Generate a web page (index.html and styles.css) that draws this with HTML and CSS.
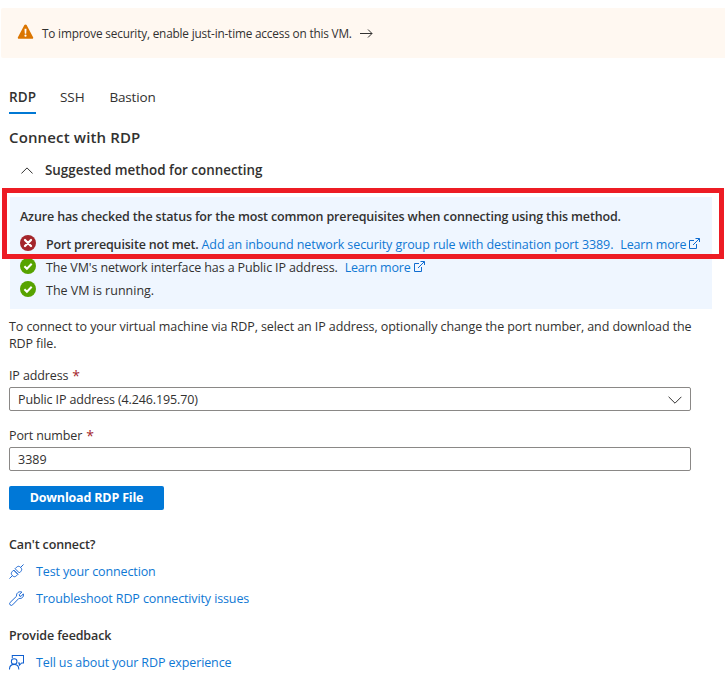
FILE: index.html
```
<!DOCTYPE html>
<html lang="en">
<head>
<meta charset="utf-8">
<title>Connect with RDP</title>
<link rel="stylesheet" href="styles.css">
</head>
<body>
<div class="banner">
  <svg class="warn" width="17" height="16" viewBox="0 0 17 16"><path d="M7.400 1.100a1.200 1.200 0 0 1 2.200 0l6.500 12.200c.4.800-.1 1.500-.9 1.500H1.800c-.8 0-1.300-.7-.9-1.500z" fill="#db7500"/><path d="M7.500 4.800h2l-.3 4.900H7.800z" fill="#fff"/><circle cx="8.500" cy="11.700" r="1.100" fill="#fff"/></svg>
  <span class="t t-banner">To improve security, enable just-in-time access on this VM.</span>
  <svg class="arrow" width="13" height="10" viewBox="0 0 13 10" fill="none" stroke="#323130"><path d="M0 5.500h12M8 1.500l4 4-4 4"/></svg>
</div>
<main>
  <nav class="tabs">
    <a class="tab active"><span class="t t-rdp">RDP</span></a>
    <a class="tab"><span class="t t-ssh">SSH</span></a>
    <a class="tab"><span class="t t-bastion">Bastion</span></a>
  </nav>
  <h1><span class="t t-h1">Connect with RDP</span></h1>
  <h2><svg width="12" height="7" viewBox="0 0 12 7" fill="none" stroke="#323130"><path d="M.4 6.500 6 .9l5.600 5.600"/></svg><span class="t t-h2">Suggested method for connecting</span></h2>
  <section class="panel">
    <div class="title"><span class="t t-title">Azure has checked the status for the most common prerequisites when connecting using this method.</span></div>
    <div class="row first">
      <svg class="status" width="16" height="16" viewBox="0 0 16 16"><circle cx="8" cy="8" r="8" fill="#a4262c"/><path d="m5 5 6 6M11 5l-6 6" stroke="#fff" stroke-width="2.300" stroke-linecap="round"/></svg>
      <b class="t t-port">Port prerequisite not met.</b><a class="t t-add">Add an inbound network security group rule with destination port 3389.</a><a class="t learn">Learn more</a>
      <svg class="ext" width="12" height="11" viewBox="0 0 12 11" fill="none" stroke="#0f6cd0"><path d="M6 2.500H1.500v8h7V6M7.500.5h4V4M11.300.7 5 7"/></svg>
    </div>
    <div class="row">
      <svg class="status" width="16" height="16" viewBox="0 0 16 16"><circle cx="8" cy="8" r="8" fill="#57a300"/><path d="m4.400 8.300 2.500 2.500 4.800-5" fill="none" stroke="#fff" stroke-width="2"/></svg>
      <span class="t t-vm">The VM's network interface has a Public IP address.</span><a class="t learn">Learn more</a>
      <svg class="ext" width="12" height="11" viewBox="0 0 12 11" fill="none" stroke="#0f6cd0"><path d="M6 2.500H1.500v8h7V6M7.500.5h4V4M11.300.7 5 7"/></svg>
    </div>
    <div class="row">
      <svg class="status" width="16" height="16" viewBox="0 0 16 16"><circle cx="8" cy="8" r="8" fill="#57a300"/><path d="m4.400 8.300 2.500 2.500 4.800-5" fill="none" stroke="#fff" stroke-width="2"/></svg>
      <span class="t t-run">The VM is running.</span>
    </div>
    <div class="highlight"></div>
  </section>
  <p class="intro"><span class="t t-p1">To connect to your virtual machine via RDP, select an IP address, optionally change the port number, and download the</span><br><span class="t t-p2">RDP file.</span></p>
  <label><span class="t t-ip">IP address</span><span class="star">*</span></label>
  <div class="field select"><span class="t t-pub">Public IP address (4.246.195.70)</span><svg width="14" height="8" viewBox="0 0 14 8" fill="none" stroke="#323130"><path d="m.6.8 6.400 6.400L13.400.8"/></svg></div>
  <label class="port"><span class="t t-num">Port number</span><span class="star">*</span></label>
  <div class="field"><span class="t t-3389">3389</span></div>
  <button><span class="t t-dl">Download RDP File</span></button>
  <h3 class="cant"><span class="t t-cant">Can't connect?</span></h3>
  <a class="link"><svg width="15" height="15" viewBox="0 0 16 16" fill="none" stroke="#0f5fd0"><path d="M.5 15.500 3.600 12.400M12.400 3.600 15.500.5M5 6.500l4.500 4.500M3.600 12.400c-1.500-1.500-1.500-2.800-.2-4.300L5 6.500l4.500 4.500-1.600 1.600c-1.500 1.300-2.800 1.300-4.300-.2zM6.500 5l4.500 4.500 1.600-1.600c1.300-1.500 1.300-2.800-.2-4.300-1.500-1.500-2.800-1.500-4.300-.2z"/></svg><span class="t t-test">Test your connection</span></a>
  <a class="link"><svg width="15" height="15" viewBox="0 0 16 16" fill="none" stroke="#0f5fd0"><path d="M13.700 1.100 11 3.800l.3 1.600 1.500.3 2.500-2.700c.8 3.200-1.700 5.600-4.800 4.900l-6.700 6.900a1.800 1.800 0 0 1-2.600-2.600l6.900-6.700C7.500 2.400 10.500-.1 13.700 1.100z"/></svg><span class="t t-trouble">Troubleshoot RDP connectivity issues</span></a>
  <h3 class="feedback"><span class="t t-prov">Provide feedback</span></h3>
  <a class="link"><svg width="15" height="15" viewBox="0 0 16 16" fill="none" stroke="#0f5fd0" stroke-width="1.100"><path d="M3.500 3.500v-3h12v8h-2l-2.500 2.500V8.500H9.500"/><circle cx="5.500" cy="7" r="3"/><path d="M.5 15.500c0-3.500 2-5.500 5-5.500s5 2 5 5.500"/></svg><span class="t t-tell">Tell us about your RDP experience</span></a>
</main>
</body>
</html>
```

FILE: styles.css
```
* { box-sizing: border-box; }
body { margin: 0; background: #fff; color: #323130; font: 12.5px/20px "Open Sans", "Noto Sans", sans-serif; }
.t { white-space: nowrap; flex: none; letter-spacing: -.12px; }
svg { display: block; flex: none; }
.banner { display: flex; align-items: center; height: 50px; margin: 8px 0 0 1px; padding-left: 17px; background: #fff8f1; border-radius: 2px 0 0 2px; }
.warn { margin: 0 8px 2px -1px; }
.t-banner { margin-bottom: 1px; font-size: 11.8px; letter-spacing: -.18px; }
.arrow { margin-left: 8px; }
main { padding: 0 13px 0 9px; }
.tabs { display: flex; gap: 24px; margin-top: 28px; }
.tab { height: 28px; line-height: 22px; border-bottom: 2px solid transparent; font-size: 13.5px; }
.tab .t { letter-spacing: -.1px; }
.tab .t-bastion { margin-left: 1px; letter-spacing: -.18px; }
.active { border-color: #0078d4; }
.tab .t-rdp { font-weight: 600; letter-spacing: .07px; }
h1, h2, h3 { margin: 0; font-weight: 600; }
h1 { margin-top: 13px; font-size: 15px; line-height: 20px; }
.t-h1 { letter-spacing: .14px; }
h2 { display: flex; align-items: center; gap: 12px; margin-top: 13px; padding-left: 12px; font-size: 13.4px; }
.t-h2 { letter-spacing: 0; }
.panel { position: relative; width: 702px; height: 112px; margin: 17px 0 0 1px; padding: 10px; background: #eff6ff; }
.title { font-weight: 600; }
.t-title { letter-spacing: -.15px; }
.row { display: flex; align-items: center; height: 20px; margin-top: 3px; }
.first { margin-top: 8px; }
.row b { font-weight: 600; letter-spacing: -.185px; }
.status { margin: -4px 10px 0 0; }
.t-add { margin-left: 3px; letter-spacing: -.085px; }
.t-run { letter-spacing: 0; }
.learn { margin-left: 7px; letter-spacing: -.18px; }
.ext { margin: -3px 0 0 2px; }
a.t, .link { color: #0f78d4; }
.highlight { position: absolute; left: -8px; top: -9px; width: 722px; height: 71px; border: 5px solid #ed1c24; }
.intro { margin: 9px 0 0; line-height: 17px; }
.t-p1 { letter-spacing: -.088px; }
label { display: flex; gap: 4px; margin-top: 14px; height: 20px; }
.port { margin-top: 15px; }
.star { color: #a4262c; font-size: 14px; }
.field { display: flex; align-items: center; justify-content: space-between; width: 682px; height: 24px; margin-top: 1px; padding: 1px 8px 0; border: 1px solid #8a8886; border-radius: 2px; }
.t-3389 { letter-spacing: 0; }
button { display: flex; align-items: center; justify-content: center; width: 155px; height: 24px; margin-top: 15px; padding: 0 0 1px; border: 0; border-radius: 2px; background: #0078d7; color: #fff; font: 700 12.5px/20px "Open Sans", sans-serif; }
.t-dl { letter-spacing: -.18px; }
.cant { margin-top: 25px; font-size: 12.5px; }
.feedback { margin-top: 17px; font-size: 12.5px; }
.link { display: flex; align-items: center; gap: 12px; height: 20px; margin-top: 7px; }
.link svg { margin-top: -1px; }
```
